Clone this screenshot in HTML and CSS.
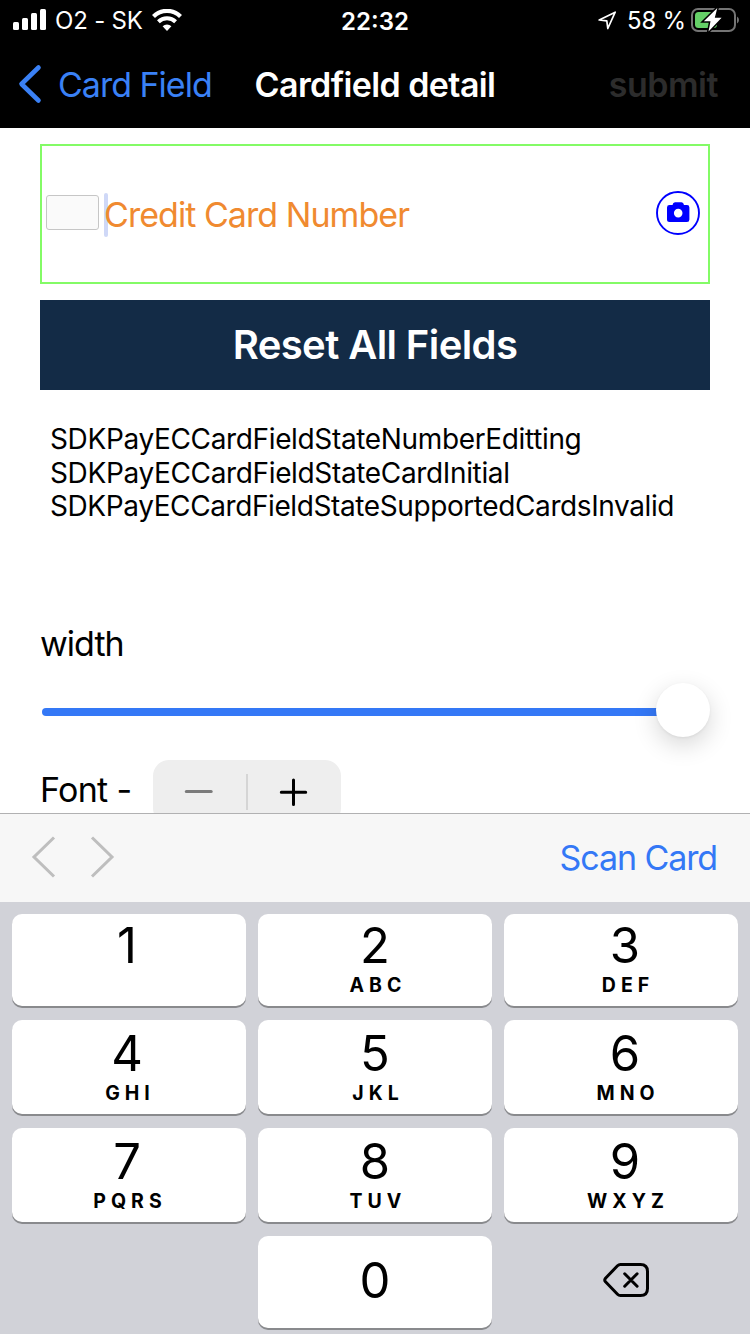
FILE: index.html
```html
<!DOCTYPE html>
<html lang="en">
<head>
<meta charset="utf-8">
<title>Cardfield detail</title>
<link rel="stylesheet" href="styles.css">
</head>
<body>
<div class="screen">
  <header class="top">
    <div class="status">
      <div class="status-left">
        <svg class="signal" width="34" height="22" viewBox="0 0 34 22" fill="#fff"><rect x="0" y="13" width="6" height="8" rx="1.5"/><rect x="9" y="9" width="6" height="12" rx="1.5"/><rect x="18" y="4" width="6" height="17" rx="1.5"/><rect x="27" y="0" width="6" height="21" rx="1.5"/></svg>
        <span class="carrier">O2 - SK</span>
        <svg class="wifi" width="30" height="22" viewBox="0 0 30 22"><g fill="none" stroke="#fff"><path d="M1.500 7.400A19.200 19.200 0 0 1 28.500 7.400" stroke-width="4.200"/><path d="M6.400 12.800A12.400 12.400 0 0 1 23.600 12.800" stroke-width="4"/></g><path d="M15 22 10.600 17.300A6.200 6.200 0 0 1 19.400 17.300Z" fill="#fff"/></svg>
      </div>
      <span class="clock">22:32</span>
      <div class="status-right">
        <svg class="location" width="19" height="19" viewBox="0 0 19 19"><path d="M1.200 9 17.200 1.200 9.800 17.500 8.800 9.800Z" fill="none" stroke="#fff" stroke-width="1.700" stroke-linejoin="round"/></svg>
        <span class="percent">58 %</span>
        <svg class="battery" width="48" height="24" viewBox="0 0 48 24"><rect x="1" y="1" width="43" height="22" rx="6" fill="none" stroke="#747474" stroke-width="2"/><path d="M46 8.500Q48 9.500 48 12T46 15.500Z" fill="#747474"/><rect x="4" y="4" width="22" height="16" rx="3.500" fill="#65d067"/><path d="M26.300 0 12.800 13.300H19.500L17.500 23.400 30.600 9.700H23.800Z" fill="#fff" stroke="#000" stroke-width="3" paint-order="stroke"/></svg>
      </div>
    </div>
    <nav class="nav">
      <div class="back">
        <svg width="24" height="40" viewBox="0 0 24 40"><path d="M20.500 3.500 3.500 20 20.500 36.500" fill="none" stroke="#3a81f6" stroke-width="4.600" stroke-linecap="round" stroke-linejoin="round"/></svg>
        <span class="back-label">Card Field</span>
      </div>
      <h1 class="title">Cardfield detail</h1>
      <span class="submit">submit</span>
    </nav>
  </header>

  <main class="content">
    <div class="card-field">
      <span class="card-image"></span>
      <span class="caret"></span>
      <span class="placeholder">Credit Card Number</span>
      <svg class="camera" width="44" height="44" viewBox="0 0 44 44"><circle cx="22" cy="22" r="21" fill="none" stroke="#00f" stroke-width="1.900"/><path fill="#00f" fill-rule="evenodd" d="M13.500 14H16.500Q17 11.200 19 11.200H25.500Q27.500 11.200 28 14H31Q33.400 14 33.400 16.400V28.500Q33.400 31 31 31H13.500Q11 31 11 28.500V16.400Q11 14 13.500 14ZM22.200 17.800A4.300 4.300 0 1 0 22.200 26.400A4.300 4.300 0 1 0 22.200 17.800Z"/></svg>
    </div>
    <button class="reset">Reset All Fields</button>
    <div class="log">
      <span class="log-a">SDKPayECCardFieldStateNumberEditting</span>
      <span class="log-b">SDKPayECCardFieldStateCardInitial</span>
      <span class="log-c">SDKPayECCardFieldStateSupportedCardsInvalid</span>
    </div>
    <div class="width-label">width</div>
    <div class="slider"><span class="track"></span><span class="thumb"></span></div>
    <div class="font-row">
      <span class="font-label">Font -</span>
      <div class="stepper">
        <svg width="188" height="64" viewBox="0 0 188 64"><path d="M33.300 31.500H58.200" stroke="#7b7b7b" stroke-width="3" stroke-linecap="round"/><path d="M94 14V50" stroke="#d5d5d5" stroke-width="2"/><path d="M128.300 32.300H152.700M140.500 20.100V44.500" stroke="#000" stroke-width="3" stroke-linecap="round"/></svg>
      </div>
    </div>
  </main>

  <div class="accessory">
    <svg width="84" height="44" viewBox="0 0 84 44"><path d="M23 2.500 3 22 23 41.500M61 2.500 81 22 61 41.500" fill="none" stroke="#bebebe" stroke-width="3"/></svg>
    <span class="scan">Scan Card</span>
  </div>

  <div class="keypad">
    <div class="key left"><b>1</b></div>
    <div class="key"><b>2</b><i>ABC</i></div>
    <div class="key right"><b>3</b><i>DEF</i></div>
    <div class="key mid left"><b>4</b><i>GHI</i></div>
    <div class="key mid"><b>5</b><i>JKL</i></div>
    <div class="key mid right"><b>6</b><i>MNO</i></div>
    <div class="key mid left"><b>7</b><i>PQRS</i></div>
    <div class="key mid"><b>8</b><i>TUV</i></div>
    <div class="key mid right"><b>9</b><i>WXYZ</i></div>
    <div></div>
    <div class="key zero"><b>0</b></div>
    <div class="delete">
      <svg width="48" height="36" viewBox="0 0 48 36"><path d="M18.500 2.500H38.500Q45.500 2.500 45.500 9.500V26.500Q45.500 33.500 38.500 33.500H18.500Q16.800 33.500 15.500 32.200L3.500 19.800Q2 18 3.500 16.200L15.500 3.800Q16.800 2.500 18.500 2.500ZM22.700 11.800 35.100 24.200M35.100 11.800 22.700 24.200" fill="none" stroke="#000" stroke-width="3" stroke-linecap="round" stroke-linejoin="round"/></svg>
    </div>
  </div>
</div>
</body>
</html>
```
FILE: styles.css
```css
* { box-sizing: border-box; }
body {
  margin: 0;
  font-family: Inter, "Liberation Sans", sans-serif;
  background: #fff;
  color: #000;
}
svg { display: block; flex: none; }
span, h1, button { white-space: nowrap; }
.screen {
  width: 750px;
  height: 1334px;
  display: flex;
  flex-direction: column;
  overflow: hidden;
}

.top { height: 128px; flex: none; background: #000; color: #fff; }
.status, .nav {
  display: grid;
  grid-template-columns: 1fr auto 1fr;
  align-items: center;
}
.status { height: 41px; font-size: 24px; }
.status-left { display: flex; align-items: center; padding-left: 13px; }
.status-right { display: flex; align-items: center; justify-content: flex-end; padding-right: 11px; }
.signal { margin-right: 8px; margin-top: -1px; }
.carrier { letter-spacing: -0.2px; margin-right: 9px; }
.wifi { margin-top: -1px; }
.clock { font-weight: 600; padding-top: 1px; }
.location { margin-right: 10px; }
.percent { margin-right: 5px; letter-spacing: -0.2px; }
.battery { margin-top: -2px; }
.nav { height: 86px; font-size: 34px; }
.back { display: flex; align-items: center; padding-left: 18px; color: #3a81f6; }
.back-label { margin-left: 16px; letter-spacing: -1px; }
.title { margin: 0; font-size: 34px; font-weight: 600; letter-spacing: -0.6px; }
.submit { justify-self: end; margin-right: 32px; font-weight: 600; color: #2c2c2c; letter-spacing: -0.5px; }

.content { height: 685px; flex: none; padding: 16px 40px 0; overflow: hidden; }
.card-field {
  height: 140px;
  border: 2px solid #83fb66;
  display: flex;
  align-items: center;
  padding: 0 8px 0 4px;
}
.card-image {
  width: 53px;
  height: 35px;
  margin-top: -3px;
  border: 1px solid #c6c6c6;
  border-radius: 3px;
  background: #fafafa;
}
.caret { width: 4px; height: 44px; margin: 1px 0 0 5px; border-radius: 2px; background: #cfd8f7; }
.placeholder { margin-left: -4px; margin-top: 1px; font-size: 34px; color: #f08a30; letter-spacing: -0.95px; }
.camera { margin-left: auto; margin-top: -2px; }
.reset {
  display: block;
  width: 100%;
  height: 90px;
  margin-top: 16px;
  padding: 0 0 1px;
  border: 0;
  background: #132b46;
  color: #fff;
  font: 600 40px Inter, sans-serif;
  letter-spacing: -0.6px;
}
.log {
  display: flex;
  flex-direction: column;
  margin-top: 33px;
  padding-left: 10px;
  font-size: 28px;
  line-height: 33.5px;
  letter-spacing: -0.35px;
}
.log-c { letter-spacing: -0.4px; }
.width-label { margin-top: 100px; font-size: 34px; line-height: 39px; letter-spacing: -1px; }
.slider { display: flex; align-items: center; height: 56px; margin-top: 19px; padding-left: 2px; }
.track { width: 620px; height: 8px; margin-top: 5px; border-radius: 4px; background: #3478f6; }
.thumb {
  width: 54px;
  height: 54px;
  margin-left: -6px;
  border-radius: 50%;
  background: #fff;
  box-shadow: 0 8px 24px rgba(0, 0, 0, .16), 0 1px 3px rgba(0, 0, 0, .06);
}
.font-row { display: flex; margin-top: 22px; }
.font-label { width: 113px; font-size: 34px; line-height: 59px; letter-spacing: -0.7px; }
.stepper { width: 188px; height: 64px; border-radius: 16px; background: #eee; }

.accessory {
  height: 89px;
  flex: none;
  display: flex;
  align-items: center;
  justify-content: space-between;
  padding: 0 33px 2px 31px;
  border-top: 1px solid #b1b1b2;
  background: #f7f7f7;
}
.scan { font-size: 34px; color: #3478f6; letter-spacing: -1.1px; }

.keypad {
  height: 432px;
  flex: none;
  display: grid;
  grid-template-columns: repeat(3, 234px);
  grid-template-rows: 92px 94px 94px 92px;
  gap: 14px 12px;
  padding: 12px 12px 0;
  background: #d1d2d8;
}
.key {
  display: flex;
  flex-direction: column;
  align-items: center;
  padding-top: 1px;
  border-radius: 10px;
  background: #fff;
  box-shadow: 0 2px 0 #898a8d;
}
.key.mid { padding-top: 3px; }
.key.zero { padding-top: 14px; }
.key.left { padding-right: 4px; }
.key.right { padding-left: 8px; }
.key b { font-size: 49px; font-weight: 400; line-height: 61px; }
.key i {
  margin-top: -3px;
  padding-left: 6px;
  font-size: 19.5px;
  font-style: normal;
  font-weight: 650;
  line-height: 24px;
  letter-spacing: 5px;
}
.delete { display: flex; justify-content: center; padding: 26px 0 0 10px; }
```
